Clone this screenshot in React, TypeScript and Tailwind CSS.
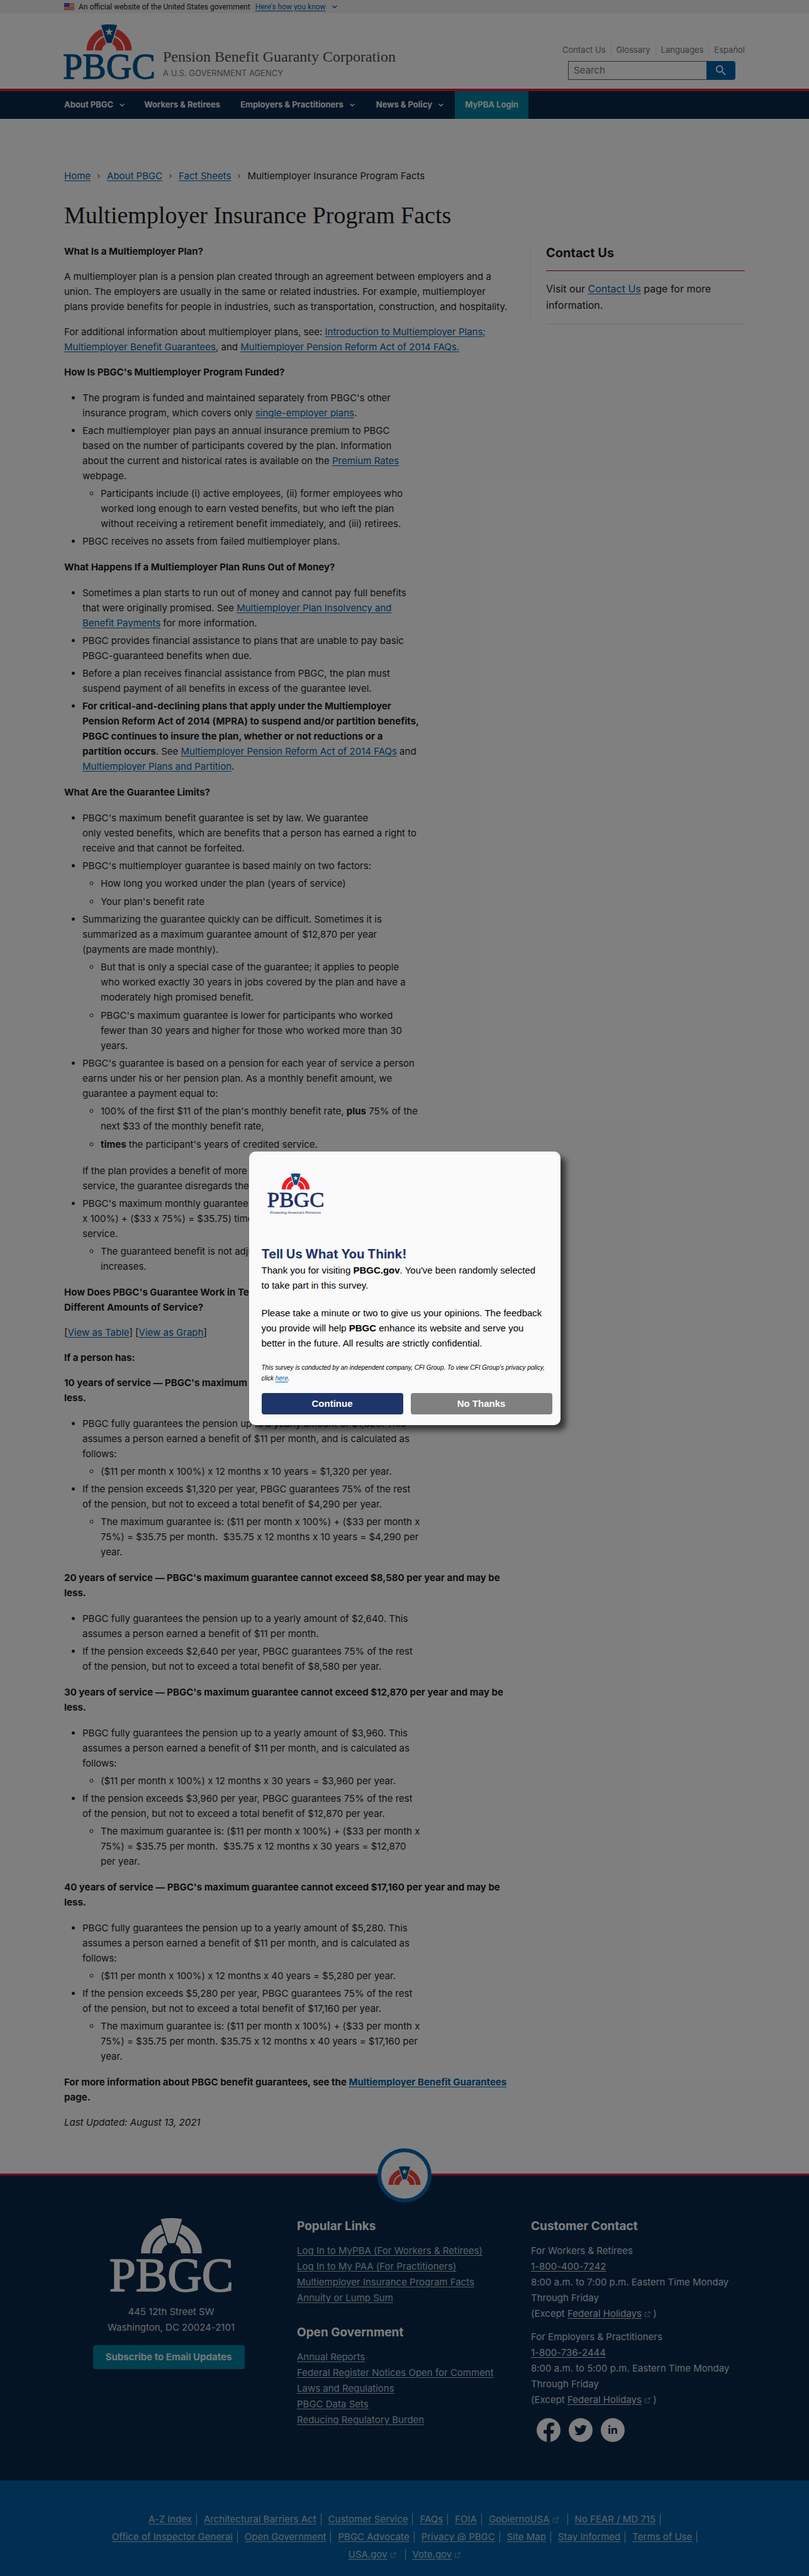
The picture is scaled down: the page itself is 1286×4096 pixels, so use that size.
import React from "react";
import { ChevronDown, ChevronRight } from "lucide-react";
import { FaFacebookF, FaLinkedinIn, FaTwitter } from "react-icons/fa";
import { MdSearch } from "react-icons/md";

type Node = React.ReactNode;

function Arch({ red, blue, star }: { red: string; blue: string; star: string }) {
  return (
    <>
      <defs>
        <clipPath id="archLeft">
          <path d="M120 110H197L231 222V252H120Z" />
        </clipPath>
        <clipPath id="archRight">
          <path d="M372 110H295L261 222V252H372Z" />
        </clipPath>
      </defs>
      <g clipPath="url(#archLeft)" fill="none" stroke={red}>
        <circle cx="246" cy="252" r="97" strokeWidth="34" />
        <circle cx="246" cy="252" r="54" strokeWidth="36" />
      </g>
      <g clipPath="url(#archRight)" fill="none" stroke={red}>
        <circle cx="246" cy="252" r="97" strokeWidth="34" />
        <circle cx="246" cy="252" r="54" strokeWidth="36" />
      </g>
      <path d="M206 124Q246 116 286 124L259 212Q246 217 233 212Z" fill={blue} />
      <path
        d="M246 137L250.500 152H266L253.500 161L258 176L246 167L234 176L238.500 161L226 152H241.500Z"
        fill={star}
      />
    </>
  );
}

function Logo({
  className,
  red,
  blue,
  star,
  letters,
}: {
  className: string;
  red: string;
  blue: string;
  star: string;
  letters: string;
}) {
  return (
    <svg viewBox="20 118 452 278" className={className} overflow="visible" role="img" aria-label="PBGC">
      <Arch red={red} blue={blue} star={star} />
      <text
        x="246"
        y="394"
        textAnchor="middle"
        fontFamily="'Liberation Serif', serif"
        fontSize="178"
        fill={letters}
        stroke={letters}
        strokeWidth="4"
      >
        PBGC
      </text>
    </svg>
  );
}

function Flag() {
  return (
    <svg viewBox="0 0 16 11" className="h-[11px] w-4" aria-hidden="true">
      <rect width="16" height="11" fill="#fff" />
      <path d="M0 .8H16M0 3.200H16M0 5.600H16M0 8H16M0 10.300H16" stroke="#db3e1f" strokeWidth="1.300" />
      <rect width="8" height="6" fill="#1e33b1" />
      <path d="M1 1.500H7M1 3H7M1 4.500H7" stroke="#fff" strokeWidth=".6" strokeDasharray="1 1" />
    </svg>
  );
}

function External() {
  return (
    <svg viewBox="0 0 12 12" className="ml-1 inline-block h-[10px] w-[10px] opacity-70" aria-hidden="true">
      <path d="M5 2.500H1.500V10.500H9.500V7M7 1H11V5M11 1L5.500 6.500" fill="none" stroke="currentColor" strokeWidth="1.200" />
    </svg>
  );
}

function A({ children }: { children: Node }) {
  return (
    <a href="#" className="text-[#005ea2] underline underline-offset-2">
      {children}
    </a>
  );
}

/** Joins the given lines with hard breaks. */
function Lines({ of }: { of: Node[] }) {
  return (
    <>
      {of.map((line, i) => (
        <React.Fragment key={i}>
          {i > 0 && <br />}
          {line}
        </React.Fragment>
      ))}
    </>
  );
}

function Q({ children }: { children: Node }) {
  return <p className="my-4 font-bold">{children}</p>;
}

function List({ children }: { children: Node }) {
  return <ul className="my-[17px] list-disc space-y-1 pl-[29px]">{children}</ul>;
}

function Sub({ children }: { children: Node }) {
  return <ul className="mt-1 list-[circle] space-y-[5px] pl-[29px]">{children}</ul>;
}

function Years({
  years,
  cap,
  full,
  calc,
  max,
}: {
  years: number;
  cap: string;
  full: string;
  calc?: boolean;
  max?: string[];
}) {
  return (
    <>
      <Q>
        <Lines of={[`${years} years of service — PBGC's maximum guarantee cannot exceed ${cap} per year and may be`, "less."]} />
      </Q>
      <List>
        <li>
          <Lines
            of={
              calc
                ? [
                    `PBGC fully guarantees the pension up to a yearly amount of ${full}. This`,
                    "assumes a person earned a benefit of $11 per month, and is calculated as",
                    "follows:",
                  ]
                : [
                    `PBGC fully guarantees the pension up to a yearly amount of ${full}. This`,
                    "assumes a person earned a benefit of $11 per month.",
                  ]
            }
          />
          {calc && (
            <Sub>
              <li>{`($11 per month x 100%) x 12 months x ${years} years = ${full} per year.`}</li>
            </Sub>
          )}
        </li>
        <li>
          <Lines
            of={[
              `If the pension exceeds ${full} per year, PBGC guarantees 75% of the rest`,
              `of the pension, but not to exceed a total benefit of ${cap} per year.`,
            ]}
          />
          {max && (
            <Sub>
              <li>
                <Lines of={["The maximum guarantee is: ($11 per month x 100%) + ($33 per month x", ...max]} />
              </li>
            </Sub>
          )}
        </li>
      </List>
    </>
  );
}

function Article() {
  return (
    <article className="whitespace-nowrap text-[15px] leading-6 [&>p:first-child]:mt-0">
      <Q>What Is a Multiemployer Plan?</Q>
      <p className="my-4">
        <Lines
          of={[
            "A multiemployer plan is a pension plan created through an agreement between employers and a",
            "union. The employers are usually in the same or related industries. For example, multiemployer",
            "plans provide benefits for people in industries, such as transportation, construction, and hospitality.",
          ]}
        />
      </p>
      <p className="my-4">
        For additional information about multiemployer plans, see: <A>Introduction to Multiemployer Plans;</A>
        <br />
        <A>Multiemployer Benefit Guarantees</A>, and <A>Multiemployer Pension Reform Act of 2014 FAQs.</A>
      </p>
      <Q>How Is PBGC's Multiemployer Program Funded?</Q>
      <List>
        <li>
          The program is funded and maintained separately from PBGC's other
          <br />
          insurance program, which covers only <A>single-employer plans</A>.
        </li>
        <li>
          <Lines
            of={[
              "Each multiemployer plan pays an annual insurance premium to PBGC",
              "based on the number of participants covered by the plan. Information",
              <>
                about the current and historical rates is available on the <A>Premium Rates</A>
              </>,
              "webpage.",
            ]}
          />
          <Sub>
            <li>
              <Lines
                of={[
                  "Participants include (i) active employees, (ii) former employees who",
                  "worked long enough to earn vested benefits, but who left the plan",
                  "without receiving a retirement benefit immediately, and (iii) retirees.",
                ]}
              />
            </li>
          </Sub>
        </li>
        <li>PBGC receives no assets from failed multiemployer plans.</li>
      </List>
      <Q>What Happens If a Multiemployer Plan Runs Out of Money?</Q>
      <List>
        <li>
          Sometimes a plan starts to run out of money and cannot pay full benefits
          <br />
          that were originally promised. See{" "}
          <A>
            Multiemployer Plan Insolvency and
            <br />
            Benefit Payments
          </A>{" "}
          for more information.
        </li>
        <li>
          <Lines
            of={[
              "PBGC provides financial assistance to plans that are unable to pay basic",
              "PBGC-guaranteed benefits when due.",
            ]}
          />
        </li>
        <li>
          <Lines
            of={[
              "Before a plan receives financial assistance from PBGC, the plan must",
              "suspend payment of all benefits in excess of the guarantee level.",
            ]}
          />
        </li>
        <li>
          <b>
            <Lines
              of={[
                "For critical-and-declining plans that apply under the Multiemployer",
                "Pension Reform Act of 2014 (MPRA) to suspend and/or partition benefits,",
                "PBGC continues to insure the plan, whether or not reductions or a",
                "partition occurs",
              ]}
            />
          </b>
          . See <A>Multiemployer Pension Reform Act of 2014 FAQs</A> and
          <br />
          <A>Multiemployer Plans and Partition</A>.
        </li>
      </List>
      <Q>What Are the Guarantee Limits?</Q>
      <List>
        <li>
          <Lines
            of={[
              "PBGC's maximum benefit guarantee is set by law. We guarantee",
              "only vested benefits, which are benefits that a person has earned a right to",
              "receive and that cannot be forfeited.",
            ]}
          />
        </li>
        <li>
          PBGC's multiemployer guarantee is based mainly on two factors:
          <Sub>
            <li>How long you worked under the plan (years of service)</li>
            <li>Your plan's benefit rate</li>
          </Sub>
        </li>
        <li>
          <Lines
            of={[
              "Summarizing the guarantee quickly can be difficult. Sometimes it is",
              "summarized as a maximum guarantee amount of $12,870 per year",
              "(payments are made monthly).",
            ]}
          />
          <Sub>
            <li>
              <Lines
                of={[
                  "But that is only a special case of the guarantee; it applies to people",
                  "who worked exactly 30 years in jobs covered by the plan and have a",
                  "moderately high promised benefit.",
                ]}
              />
            </li>
            <li>
              <Lines
                of={[
                  "PBGC's maximum guarantee is lower for participants who worked",
                  "fewer than 30 years and higher for those who worked more than 30",
                  "years.",
                ]}
              />
            </li>
          </Sub>
        </li>
        <li>
          <Lines
            of={[
              "PBGC's guarantee is based on a pension for each year of service a person",
              "earns under his or her pension plan. As a monthly benefit amount, we",
              "guarantee a payment equal to:",
            ]}
          />
          <Sub>
            <li>
              100% of the first $11 of the plan's monthly benefit rate, <b>plus</b> 75% of the
              <br />
              next $33 of the monthly benefit rate,
            </li>
            <li>
              <b>times</b> the participant's years of credited service.
            </li>
          </Sub>
          <p className="mt-[18px]">
            <Lines
              of={[
                "If the plan provides a benefit of more than $44 per month per year of",
                "service, the guarantee disregards the excess amount.",
              ]}
            />
          </p>
        </li>
        <li>
          <Lines
            of={[
              "PBGC's maximum monthly guarantee is $35.75 per month (($11",
              "x 100%) + ($33 x 75%) = $35.75) times years of credited",
              "service.",
            ]}
          />
          <Sub>
            <li>
              <Lines of={["The guaranteed benefit is not adjusted for cost-of-living", "increases."]} />
            </li>
          </Sub>
        </li>
      </List>
      <Q>
        <Lines of={["How Does PBGC's Guarantee Work in Terms of Benefits for People With", "Different Amounts of Service?"]} />
      </Q>
      <p className="my-4">
        [<A>View as Table</A>] [<A>View as Graph</A>]
      </p>
      <Q>If a person has:</Q>
      <Years
        years={10}
        cap="$4,290"
        full="$1,320"
        calc
        max={["75%) = $35.75 per month.\u00a0 $35.75 x 12 months x 10 years = $4,290 per", "year."]}
      />
      <Years years={20} cap="$8,580" full="$2,640" />
      <Years
        years={30}
        cap="$12,870"
        full="$3,960"
        calc
        max={["75%) = $35.75 per month.\u00a0 $35.75 x 12 months x 30 years = $12,870", "per year."]}
      />
      <Years
        years={40}
        cap="$17,160"
        full="$5,280"
        calc
        max={["75%) = $35.75 per month. $35.75 x 12 months x 40 years = $17,160 per", "year."]}
      />
      <Q>
        For more information about PBGC benefit guarantees, see the <A>Multiemployer Benefit Guarantees</A>
        <br />
        page.
      </Q>
      <p className="italic">Last Updated: August 13, 2021</p>
    </article>
  );
}

function Header() {
  return (
    <header>
      <div className="h-[21px] bg-[#f0f0f0]">
        <div className="mx-auto flex h-full max-w-[1082px] items-center font-[Roboto,sans-serif] text-[12px] leading-4">
          <Flag />
          <span className="ml-[7px]">An official website of the United States government</span>
          <button className="ml-2 flex items-center gap-2 text-[#005ea2]">
            <span className="underline underline-offset-2">Here's how you know</span>
            <ChevronDown className="h-3 w-3" strokeWidth={3} />
          </button>
        </div>
      </div>
      <div className="mx-auto flex h-[120px] max-w-[1082px] items-start justify-between pt-[17px]">
        <div className="flex items-end">
          <Logo className="h-[88px] w-[143px]" red="#f0443c" blue="#00558c" star="#fff" letters="#00558c" />
          <div className="ml-[14px] text-[#4a4a4a]">
            <p className="font-['Liberation_Serif',serif] text-[24px] leading-8">Pension Benefit Guaranty Corporation</p>
            <p className="text-[13px] leading-5 text-[#71767a]">A U.S. GOVERNMENT AGENCY</p>
          </div>
        </div>
        <div className="pt-[31px]">
          <ul className="flex text-[13px] leading-5 text-[#71767a]">
            <li className="border-r border-[#e6e6e6] pr-2">
              <a href="#">Contact Us</a>
            </li>
            <li className="border-r border-[#e6e6e6] px-2">
              <a href="#">Glossary</a>
            </li>
            <li className="border-r border-[#e6e6e6] px-2">
              <a href="#">Languages</a>
            </li>
            <li className="pl-2">
              <a href="#">Español</a>
            </li>
          </ul>
          <form className="ml-auto mr-[15px] mt-2 flex h-[30px] w-[266px]">
            <input
              type="search"
              aria-label="Search"
              placeholder="Search"
              className="min-w-0 flex-1 border border-r-0 border-[#565c65] px-2 text-[15px] placeholder:text-[#757575]"
            />
            <button aria-label="Submit search" className="flex w-[46px] items-center justify-center rounded-r bg-[#005ea2] text-white">
              <MdSearch className="h-[22px] w-[22px]" />
            </button>
          </form>
        </div>
      </div>
      <nav className="border-t-4 border-[#e31c3d] bg-[#08284a]">
        <div className="mx-auto flex h-11 max-w-[1082px] items-center text-[13px] font-bold text-[#f0f0f0]">
          <button className="mr-[29px] flex items-center gap-2">
            About PBGC <ChevronDown className="h-3 w-3" strokeWidth={3} />
          </button>
          <a href="#" className="mr-8">
            Workers & Retirees
          </a>
          <button className="mr-8 flex items-center gap-2">
            Employers & Practitioners <ChevronDown className="h-3 w-3" strokeWidth={3} />
          </button>
          <button className="mr-4 flex items-center gap-2">
            News & Policy <ChevronDown className="h-3 w-3" strokeWidth={3} />
          </button>
          <a href="#" className="flex h-full items-center bg-[#00819e] px-4">
            MyPBA Login
          </a>
        </div>
      </nav>
    </header>
  );
}

function Crumbs() {
  return (
    <nav aria-label="Breadcrumb" className="pt-[79px]">
      <ol className="flex items-center text-[15px] leading-6">
        {["Home", "About PBGC", "Fact Sheets"].map((c) => (
          <li key={c} className="flex items-center">
            <A>{c}</A>
            <ChevronRight className="mx-2 h-[10px] w-[10px] text-[#71767a]" strokeWidth={3} />
          </li>
        ))}
        <li aria-current="page">Multiemployer Insurance Program Facts</li>
      </ol>
    </nav>
  );
}

function FooterLinks({ title, links }: { title: string; links: string[] }) {
  return (
    <section>
      <h2 className="mb-3 text-[19px] font-bold leading-7 text-white">{title}</h2>
      <ul className="text-[15px] leading-[25px] text-[#b4c4d0]">
        {links.map((l) => (
          <li key={l}>
            <a href="#" className="underline underline-offset-2">
              {l}
            </a>
          </li>
        ))}
      </ul>
    </section>
  );
}

function Contact({ who, phone, until }: { who: string; phone: string; until: string }) {
  return (
    <p className="whitespace-nowrap">
      {who}
      <br />
      <a href="#" className="underline underline-offset-2">
        {phone}
      </a>
      <br />
      8:00 a.m. to {until} p.m. Eastern Time Monday
      <br />
      Through Friday
      <br />
      (Except{" "}
      <a href="#">
        <span className="underline underline-offset-2">Federal Holidays</span>
        <External />
      </a>{" "}
      )
    </p>
  );
}

const bottomRows: string[][] = [
  ["A-Z Index", "Architectural Barriers Act", "Customer Service", "FAQs", "FOIA", "GobiernoUSA", "No FEAR / MD 715"],
  ["Office of Inspector General", "Open Government", "PBGC Advocate", "Privacy @ PBGC", "Site Map", "Stay Informed", "Terms of Use"],
  ["USA.gov", "Vote.gov"],
];
const outside = ["GobiernoUSA", "USA.gov", "Vote.gov"];

function Footer() {
  return (
    <footer>
      <div className="relative border-t-[3px] border-[#e31c3d] bg-[#08284a] pb-[61px] pt-[67px]">
        <a
          href="#"
          aria-label="Back to top"
          className="absolute left-1/2 top-0 flex h-[86px] w-[86px] -translate-x-1/2 -translate-y-1/2 items-center justify-center rounded-full border-[6px] border-[#0066ad] bg-white"
        >
          <svg viewBox="130 118 232 136" className="w-[52px]" aria-hidden="true">
            <Arch red="#f0443c" blue="#00558c" star="#fff" />
          </svg>
        </a>
        <div className="mx-auto grid max-w-[1082px] grid-cols-[370px_372px_1fr] text-[15px] text-[#d0d8de]">
          <div className="flex w-[332px] flex-col items-center text-center">
            <Logo className="ml-2 h-[118px] w-[195px]" red="#fff" blue="#fff" star="#fff" letters="#fff" />
            <p className="ml-2 mt-[19px] leading-[25px]">
              445 12th Street SW
              <br />
              Washington, DC 20024-2101
            </p>
            <button className="mt-4 h-[38px] w-[241px] rounded bg-[#00819e] text-[15px] font-bold text-[#e6f2f5]">
              Subscribe to Email Updates
            </button>
          </div>
          <div className="space-y-[29px]">
            <FooterLinks
              title="Popular Links"
              links={[
                "Log In to MyPBA (For Workers & Retirees)",
                "Log In to My PAA (For Practitioners)",
                "Multiemployer Insurance Program Facts",
                "Annuity or Lump Sum",
              ]}
            />
            <FooterLinks
              title="Open Government"
              links={[
                "Annual Reports",
                "Federal Register Notices Open for Comment",
                "Laws and Regulations",
                "PBGC Data Sets",
                "Reducing Regulatory Burden",
              ]}
            />
          </div>
          <div className="leading-[25px]">
            <h2 className="mb-3 text-[19px] font-bold leading-7 text-white">Customer Contact</h2>
            <Contact who="For Workers & Retirees" phone="1-800-400-7242" until="7:00" />
            <div className="h-3" />
            <Contact who="For Employers & Practitioners" phone="1-800-736-2444" until="5:00" />
            <div className="ml-[9px] mt-[17px] flex gap-[13px] text-[#08284a]">
              <a href="#" aria-label="Facebook" className="flex h-[38px] w-[38px] items-end justify-center overflow-hidden rounded-full bg-white">
                <FaFacebookF className="h-[31px] w-[31px]" />
              </a>
              <a href="#" aria-label="Twitter" className="flex h-[38px] w-[38px] items-center justify-center rounded-full bg-white">
                <FaTwitter className="h-5 w-5" />
              </a>
              <a href="#" aria-label="LinkedIn" className="flex h-[38px] w-[38px] items-center justify-center rounded-full bg-white">
                <FaLinkedinIn className="h-4 w-4" />
              </a>
            </div>
          </div>
        </div>
      </div>
      <div className="bg-[#005ea2] pb-[21px] pt-12 text-[15px] text-[#b4cbd8]">
        {bottomRows.map((row, r) => (
          <ul key={r} className="flex h-7 items-center justify-center gap-[11px] leading-[18px]">
            {row.map((l) => (
              <li
                key={l}
                className={
                  l === "Vote.gov"
                    ? ""
                    : outside.includes(l)
                      ? "border-r border-[#9fc4dc] pr-[14px]"
                      : "border-r border-[#9fc4dc] pr-[7px]"
                }
              >
                <a href="#">
                  <span className="underline underline-offset-2">{l}</span>
                  {outside.includes(l) && <External />}
                </a>
              </li>
            ))}
          </ul>
        ))}
      </div>
    </footer>
  );
}

function Survey() {
  return (
    <div className="absolute inset-0 flex items-center justify-center bg-black/50">
      <div
        role="dialog"
        aria-labelledby="survey-title"
        className="w-[495px] rounded-[10px] bg-[#fafafa] pb-[17px] pl-5 pr-[13px] pt-8 font-['Liberation_Sans',sans-serif] text-[15px] leading-6 text-black shadow-[8px_8px_10px_rgba(0,0,0,0.6)]"
      >
        <div className="mb-[45px] ml-[10px] h-[72px] w-[88px]">
          <Logo className="h-[59px] w-[88px]" red="#ee1c25" blue="#004b80" star="#fff" letters="#1d2f6b" />
          <p className="whitespace-nowrap text-center text-[6px] italic leading-3 text-[#1d2f6b]">
            Protecting America's Pensions
          </p>
        </div>
        <h2 id="survey-title" className="font-[Inter,sans-serif] text-[20px] font-bold leading-7 text-[#1e356b]">
          Tell Us What You Think!
        </h2>
        <p className="whitespace-nowrap">
          Thank you for visiting <b>PBGC.gov</b>. You've been randomly selected
          <br />
          to take part in this survey.
        </p>
        <p className="mt-5 whitespace-nowrap">
          Please take a minute or two to give us your opinions. The feedback
          <br />
          you provide will help <b>PBGC</b> enhance its website and serve you
          <br />
          better in the future. All results are strictly confidential.
        </p>
        <p className="mt-[18px] whitespace-nowrap text-[10px] italic leading-[17px]">
          This survey is conducted by an independent company, CFI Group. To view CFI Group's privacy policy,
          <br />
          click <A>here</A>.
        </p>
        <div className="mt-[15px] grid grid-cols-2 gap-3 font-bold text-white">
          <button className="h-[34px] rounded bg-[#1e356b]">Continue</button>
          <button className="h-[34px] rounded bg-[#808080]">No Thanks</button>
        </div>
      </div>
    </div>
  );
}

export default function App() {
  return (
    <div className="relative min-h-screen bg-white font-[Inter,sans-serif] text-[#1b1b1b] [font-feature-settings:'calt'_0]">
      <Header />
      <main className="mx-auto max-w-[1082px] pb-[69px]">
        <Crumbs />
        <h1 className="mb-[22px] mt-[26px] font-['Liberation_Serif',serif] text-[38px] leading-[48px]">
          Multiemployer Insurance Program Facts
        </h1>
        <div className="flex items-start justify-between">
          <Article />
          <aside className="w-[342px] border-l-2 border-[#f4f4f4] pl-6">
            <h2 className="mb-[15px] border-b border-[#a01040] pb-[14px] text-[20px] font-bold leading-7">Contact Us</h2>
            <p className="border-b-2 border-[#eeeeee] pb-4 text-[16px] leading-[26px]">
              Visit our <A>Contact Us</A> page for more
              <br />
              information.
            </p>
          </aside>
        </div>
      </main>
      <Footer />
      <Survey />
    </div>
  );
}
